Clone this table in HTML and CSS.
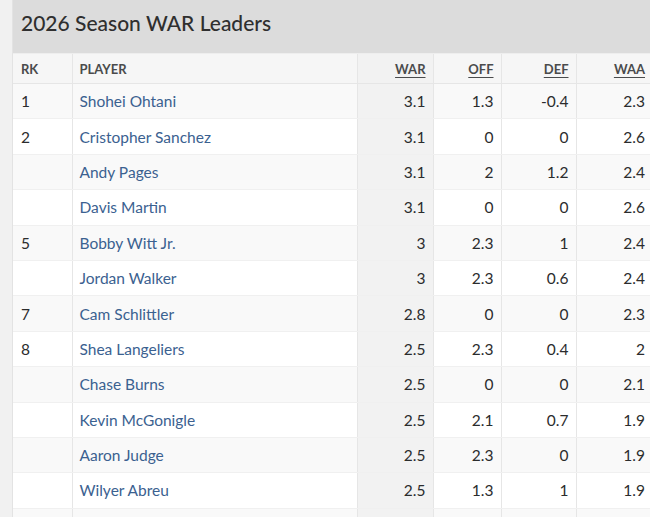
FILE: index.html
```html
<!DOCTYPE html>
<html>
<head>
<meta charset="utf-8">
<link rel="stylesheet" href="styles.css">
</head>
<body>
<div class="page">
  <div class="panel">
    <h1 class="title">2026 Season WAR Leaders</h1>
    <table class="leaders">
      <colgroup>
        <col class="c-rk"><col class="c-player"><col class="c-war"><col class="c-off"><col class="c-def"><col class="c-waa">
      </colgroup>
      <thead>
        <tr>
          <th class="left">RK</th>
          <th class="left">PLAYER</th>
          <th class="num sorted"><span class="u">WAR</span></th>
          <th class="num"><span class="u">OFF</span></th>
          <th class="num"><span class="u">DEF</span></th>
          <th class="num"><span class="u">WAA</span></th>
        </tr>
      </thead>
      <tbody>
        <tr><td>1</td><td class="name">Shohei Ohtani</td><td class="num sorted">3.1</td><td class="num">1.3</td><td class="num">-0.4</td><td class="num">2.3</td></tr>
        <tr><td>2</td><td class="name">Cristopher Sanchez</td><td class="num sorted">3.1</td><td class="num">0</td><td class="num">0</td><td class="num">2.6</td></tr>
        <tr><td></td><td class="name">Andy Pages</td><td class="num sorted">3.1</td><td class="num">2</td><td class="num">1.2</td><td class="num">2.4</td></tr>
        <tr><td></td><td class="name">Davis Martin</td><td class="num sorted">3.1</td><td class="num">0</td><td class="num">0</td><td class="num">2.6</td></tr>
        <tr><td>5</td><td class="name">Bobby Witt Jr.</td><td class="num sorted">3</td><td class="num">2.3</td><td class="num">1</td><td class="num">2.4</td></tr>
        <tr><td></td><td class="name">Jordan Walker</td><td class="num sorted">3</td><td class="num">2.3</td><td class="num">0.6</td><td class="num">2.4</td></tr>
        <tr><td>7</td><td class="name">Cam Schlittler</td><td class="num sorted">2.8</td><td class="num">0</td><td class="num">0</td><td class="num">2.3</td></tr>
        <tr><td>8</td><td class="name">Shea Langeliers</td><td class="num sorted">2.5</td><td class="num">2.3</td><td class="num">0.4</td><td class="num">2</td></tr>
        <tr><td></td><td class="name">Chase Burns</td><td class="num sorted">2.5</td><td class="num">0</td><td class="num">0</td><td class="num">2.1</td></tr>
        <tr><td></td><td class="name">Kevin McGonigle</td><td class="num sorted">2.5</td><td class="num">2.1</td><td class="num">0.7</td><td class="num">1.9</td></tr>
        <tr><td></td><td class="name">Aaron Judge</td><td class="num sorted">2.5</td><td class="num">2.3</td><td class="num">0</td><td class="num">1.9</td></tr>
        <tr><td></td><td class="name">Wilyer Abreu</td><td class="num sorted">2.5</td><td class="num">1.3</td><td class="num">1</td><td class="num">1.9</td></tr>
        <tr><td></td><td class="name"></td><td class="num sorted"></td><td class="num"></td><td class="num"></td><td class="num"></td></tr>
      </tbody>
    </table>
  </div>
</div>
</body>
</html>
```
FILE: styles.css
```css
html, body {
  margin: 0;
  padding: 0;
  overflow: hidden;
  background: #f1f1f1;
}
.page {
  display: flex;
  width: 660px;
  height: 517px;
  padding-left: 12px;
  background: #f1f1f1;
  font-family: Lato, "Liberation Sans", sans-serif;
}
.panel {
  flex: 1;
  border-left: 1px solid #e3e3e3;
  background: #fff;
  overflow: hidden;
}
.title {
  margin: 0;
  height: 53px;
  box-sizing: border-box;
  padding: 0 0 7px 8px;
  background: #dcdcdc;
  color: #2f2f2f;
  font-size: 21px;
  font-weight: 500;
  line-height: 46px;
}
.leaders {
  table-layout: fixed;
  width: 639px;
  border-collapse: collapse;
}
.c-rk { width: 59px; }
.c-player { width: 285px; }
.c-war { width: 76px; }
.c-off { width: 68px; }
.c-def { width: 75px; }
.c-waa { width: 76px; }
.leaders th {
  height: 29px;
  padding: 0 7px;
  background: #f6f6f6;
  color: #4a4b4c;
  font-size: 13px;
  font-weight: 700;
  text-align: left;
  border-top: 1px solid #eeeeee;
  border-bottom: 1px solid #e6e6e6;
  border-left: 1px solid #e6e6e6;
}
.leaders th:first-child, .leaders td:first-child { border-left: none; }
.leaders th:first-child { padding-left: 8px; }
.leaders th.num { text-align: right; }
.u {
  text-decoration: underline;
  text-underline-offset: 3px;
}
.leaders td {
  height: 34.4px;
  padding: 0 7px;
  color: #2b2c2d;
  font-size: 15.5px;
  border-left: 1px solid #e6e6e6;
  border-bottom: 1px solid #f0f0f0;
  white-space: nowrap;
}
.leaders td:first-child { padding-left: 8px; }
.leaders tbody tr:nth-child(odd) td { background: #f9f9f9; }
.leaders tbody tr:nth-child(even) td { background: #fff; }
.leaders td.num { text-align: right; }
.leaders td.name { color: #3b6190; }
.leaders tbody tr td.sorted { background: #f2f2f2; }
.leaders th.sorted { background: #f2f2f2; }
```
